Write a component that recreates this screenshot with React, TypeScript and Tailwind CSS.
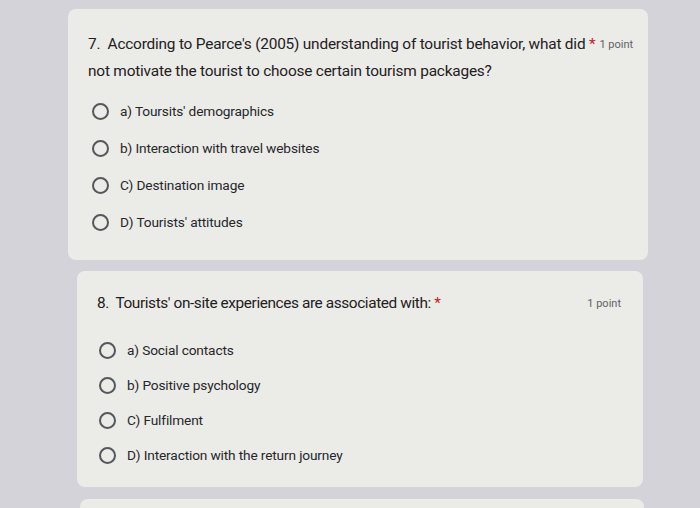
import React from 'react';

const font = { fontFamily: 'Roboto, "Liberation Sans", sans-serif' };

function Radio() {
  return <span className="block w-[17px] h-[17px] rounded-full border-2 border-[#55575c] shrink-0" />;
}

function Option({ label }: { label: string }) {
  return (
    <div className="flex items-center gap-[11px] h-[20px]">
      <Radio />
      <span className="text-[13.7px] text-[#26272a] tracking-[-0.15px]">{label}</span>
    </div>
  );
}

export default function App() {
  return (
    <div className="w-[700px] h-[508px] bg-[#d4d3da] overflow-hidden pt-[9px]" style={font}>
      {/* Question 7 */}
      <div className="ml-[68px] w-[580px] h-[251px] rounded-lg bg-[#ebebe8] pl-[20px] pr-[17px] pt-[22px]">
        <div className="flex items-start">
          <div className="flex-1 text-[15.4px] leading-[27px] text-[#1f2022] tracking-[-0.2px]">
            <div className="whitespace-nowrap">
              7.&nbsp; According to Pearce's (2005) understanding of tourist behavior, what did{' '}
              <span className="text-[#c5221f]">*</span>
            </div>
            <div>not motivate the tourist to choose certain tourism packages?</div>
          </div>
          <div className="text-[11px] text-[#5f6368] leading-[27px] ml-[4px] shrink-0">1 point</div>
        </div>
        <div className="flex flex-col gap-[17px] mt-[16px] pl-[4px]">
          <Option label="a) Toursits' demographics" />
          <Option label="b) Interaction with travel websites" />
          <Option label="C) Destination image" />
          <Option label="D) Tourists' attitudes" />
        </div>
      </div>

      {/* Question 8 */}
      <div className="mt-[11px] ml-[77px] w-[566px] h-[216px] rounded-lg bg-[#ebebe8] pl-[20px] pr-[22px] pt-[19px]">
        <div className="flex items-start justify-between">
          <div className="text-[15.4px] leading-[27px] text-[#1f2022] tracking-[-0.4px]">
            8.&nbsp; Tourists' on-site experiences are associated with: <span className="text-[#c5221f]">*</span>
          </div>
          <div className="text-[11px] text-[#5f6368] leading-[27px] shrink-0">1 point</div>
        </div>
        <div className="flex flex-col gap-[15px] mt-[23px] pl-[2px]">
          <Option label="a) Social contacts" />
          <Option label="b) Positive psychology" />
          <Option label="C) Fulfilment" />
          <Option label="D) Interaction with the return journey" />
        </div>
      </div>

      {/* Next card edge */}
      <div className="mt-[12px] ml-[80px] w-[564px] h-[40px] rounded-lg bg-[#ebebe8]" />
    </div>
  );
}
